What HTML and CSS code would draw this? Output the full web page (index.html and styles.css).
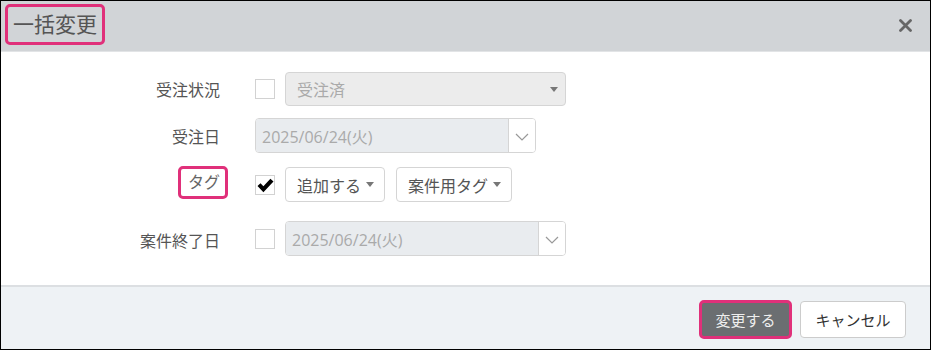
FILE: index.html
```html
<!DOCTYPE html>
<html lang="ja">
<head>
    <meta charset="UTF-8">
    <meta name="viewport" content="width=device-width, initial-scale=1.0">
    <title>一括変更</title>
    <link rel="stylesheet" href="styles.css">
</head>
<body>
    <div class="dialog">
        <div class="dialog-header">
            <h2 class="dialog-title mark">一括変更</h2>
            <button class="close-btn" aria-label="閉じる">
                <svg width="13" height="13" viewBox="0 0 13 13"><path d="M1.5 1.5 L11.5 11.5 M11.5 1.5 L1.5 11.5" stroke="#666" stroke-width="2.8" stroke-linecap="round"/></svg>
            </button>
        </div>

        <div class="dialog-body">
            <div class="form-row row-status">
                <label class="form-label">受注状況</label>
                <div class="form-controls">
                    <span class="check"></span>
                    <div class="select disabled wide">
                        <span>受注済</span>
                        <span class="caret"></span>
                    </div>
                </div>
            </div>

            <div class="form-row row-date">
                <label class="form-label">受注日</label>
                <div class="form-controls">
                    <div class="date-input">
                        <span class="date-value">2025/06/24(火)</span>
                        <span class="date-btn">
                            <svg width="14" height="8" viewBox="0 0 14 8"><polyline points="1,1 7,7 13,1" fill="none" stroke="#999" stroke-width="1.2"/></svg>
                        </span>
                    </div>
                </div>
            </div>

            <div class="form-row row-tag">
                <label class="form-label"><span class="mark tag-label">タグ</span></label>
                <div class="form-controls">
                    <span class="check checked">
                        <svg width="17" height="15" viewBox="0 0 17 15"><path d="M0.5 8 L3.5 5.2 L6.4 8.2 L13.4 0.8 L16.5 3.6 L6.4 14.2 Z" fill="#000"/></svg>
                    </span>
                    <div class="select action">
                        <span>追加する</span>
                        <span class="caret"></span>
                    </div>
                    <div class="select tagtype">
                        <span>案件用タグ</span>
                        <span class="caret"></span>
                    </div>
                </div>
            </div>

            <div class="form-row row-end">
                <label class="form-label">案件終了日</label>
                <div class="form-controls">
                    <span class="check"></span>
                    <div class="date-input">
                        <span class="date-value">2025/06/24(火)</span>
                        <span class="date-btn">
                            <svg width="14" height="8" viewBox="0 0 14 8"><polyline points="1,1 7,7 13,1" fill="none" stroke="#999" stroke-width="1.2"/></svg>
                        </span>
                    </div>
                </div>
            </div>
        </div>

        <div class="dialog-footer">
            <button class="btn btn-primary">変更する</button>
            <button class="btn btn-default">キャンセル</button>
        </div>
    </div>
</body>
</html>
```

FILE: styles.css
```css
* {
    box-sizing: border-box;
}
body {
    margin: 0;
    font-family: "Open Sans", "Noto Sans CJK JP", sans-serif;
    color: #555;
    background: #fff;
}
.dialog {
    width: 931px;
    height: 350px;
    border: 1px solid #000;
    display: flex;
    flex-direction: column;
}

/* highlight boxes */
.mark {
    border: 3px solid #e0307a;
    border-radius: 5px;
}

.dialog-header {
    height: 51px;
    background-color: #d1d4d7;
    border-bottom: 1px solid #e2e4e6;
    display: flex;
    align-items: flex-start;
    justify-content: space-between;
    padding: 3px 18px 0 4px;
}
.dialog-title {
    margin: 0;
    font-size: 21px;
    font-weight: normal;
    line-height: 29px;
    padding: 3px 5px 3px 5px;
    color: #555;
}
.close-btn {
    border: none;
    background: none;
    padding: 0;
    margin-top: 15px;
    display: flex;
}

.dialog-body {
    flex: 1;
    padding-top: 20px;
}
.form-row {
    display: grid;
    grid-template-columns: 219px auto;
    column-gap: 35px;
    align-items: center;
    height: 35px;
}
.row-status {
    height: 34px;
}
.row-date {
    margin-top: 12px;
}
.row-tag {
    margin-top: 14px;
}
.row-end {
    margin-top: 19px;
}
.form-label {
    text-align: right;
    font-size: 16px;
    color: #555;
}
.row-end .form-label {
    padding-top: 2px;
}
.tag-label {
    display: inline-block;
    padding: 2px 5px 2px 7px;
    line-height: 23px;
    margin-right: -8px;
    margin-top: -9px;
    color: #666;
}
.form-controls {
    display: flex;
    align-items: center;
    gap: 10px;
}

.check {
    width: 20px;
    height: 20px;
    border: 1px solid #d2d2d2;
    background: #fff;
    display: flex;
    align-items: center;
    justify-content: center;
}
.checked {
    overflow: visible;
}
.checked svg {
    margin-left: 1px;
    margin-top: 2px;
}

.select {
    height: 35px;
    border: 1px solid #d5d5d5;
    border-radius: 4px;
    background: #fff;
    display: flex;
    align-items: center;
    justify-content: space-between;
    padding: 0 10px 0 11px;
    font-size: 16px;
    color: #555;
}
.select.disabled {
    background-color: #ececec;
    color: #aaa;
    height: 34px;
}
.wide {
    width: 281px;
    padding-right: 7px;
}
.action {
    width: 100px;
}
.tagtype {
    width: 116px;
    margin-left: 1px;
}
.caret {
    width: 0;
    height: 0;
    border-left: 4px solid transparent;
    border-right: 4px solid transparent;
    border-top: 5px solid #777;
}

.date-input {
    width: 281px;
    height: 35px;
    display: flex;
    border: 1px solid #d5d5d5;
    border-radius: 4px;
    overflow: hidden;
}
.date-value {
    flex: 1;
    background-color: #e9ecef;
    color: #aaa;
    font-size: 16px;
    display: flex;
    align-items: center;
    padding-left: 6px;
    border-right: 1px solid #d5d5d5;
}
.date-btn {
    width: 26px;
    background: #fff;
    display: flex;
    align-items: center;
    justify-content: center;
    padding-top: 2px;
}

.dialog-footer {
    height: 64px;
    border-top: 2px solid #dcdfe2;
    background-color: #eef2f5;
    display: flex;
    align-items: center;
    justify-content: flex-end;
    gap: 8px;
    padding: 2px 24px 0 0;
}
.btn {
    font-family: "Noto Sans CJK JP", sans-serif;
    font-size: 15px;
    border-radius: 5px;
    cursor: pointer;
}
.btn-primary {
    width: 93px;
    height: 39px;
    background-color: #6b6e71;
    color: #eee;
    border: 3px solid #e0307a;
}
.btn-default {
    width: 106px;
    height: 37px;
    background-color: #fff;
    color: #333;
    border: 1px solid #ccc;
    border-radius: 4px;
}
```
